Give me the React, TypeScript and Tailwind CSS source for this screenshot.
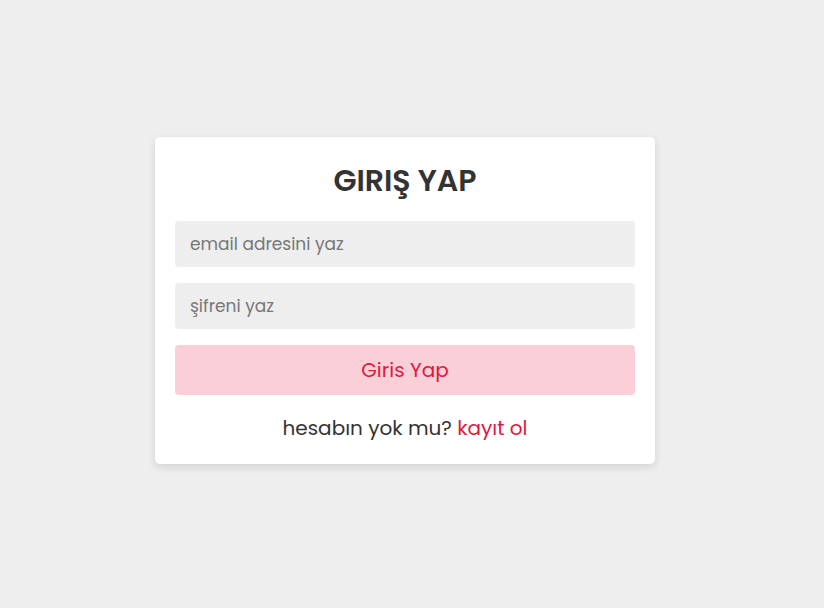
export default function App() {
    return (
        <div className="min-h-[608px] w-full bg-[#eeeeee] pl-[155px] pt-[137px]" style={{ fontFamily: "Poppins, Inter, 'Open Sans', sans-serif" }}>
            <div className="flex w-[500px] flex-col rounded-[5px] bg-white px-5 pt-[24px] pb-[22px] shadow-[0_3px_8px_rgba(0,0,0,0.12)]">
                <h1 className="text-center text-[30px] font-semibold leading-[40px] text-[#333333]">GIRIŞ YAP</h1>
                <input
                    type="email"
                    placeholder="email adresini yaz"
                    className="mt-[20px] h-[46px] rounded-[4px] bg-[#eeeeee] px-[15px] text-[17px] text-[#333] outline-none placeholder:text-[#777777]"
                />
                <input
                    type="password"
                    placeholder="şifreni yaz"
                    className="mt-4 h-[46px] rounded-[4px] bg-[#eeeeee] px-[15px] text-[17px] text-[#333] outline-none placeholder:text-[#777777]"
                />
                <button className="mt-4 h-[50px] rounded-[4px] bg-[#fbcfd8] text-[20px] text-[#e3173f]">Giris Yap</button>
                <p className="mt-[19px] text-center text-[20px] leading-[28px] text-[#333333]">
                    hesabın yok mu? <a className="text-[#e3173f]">kayıt ol</a>
                </p>
            </div>
        </div>
    )
}
